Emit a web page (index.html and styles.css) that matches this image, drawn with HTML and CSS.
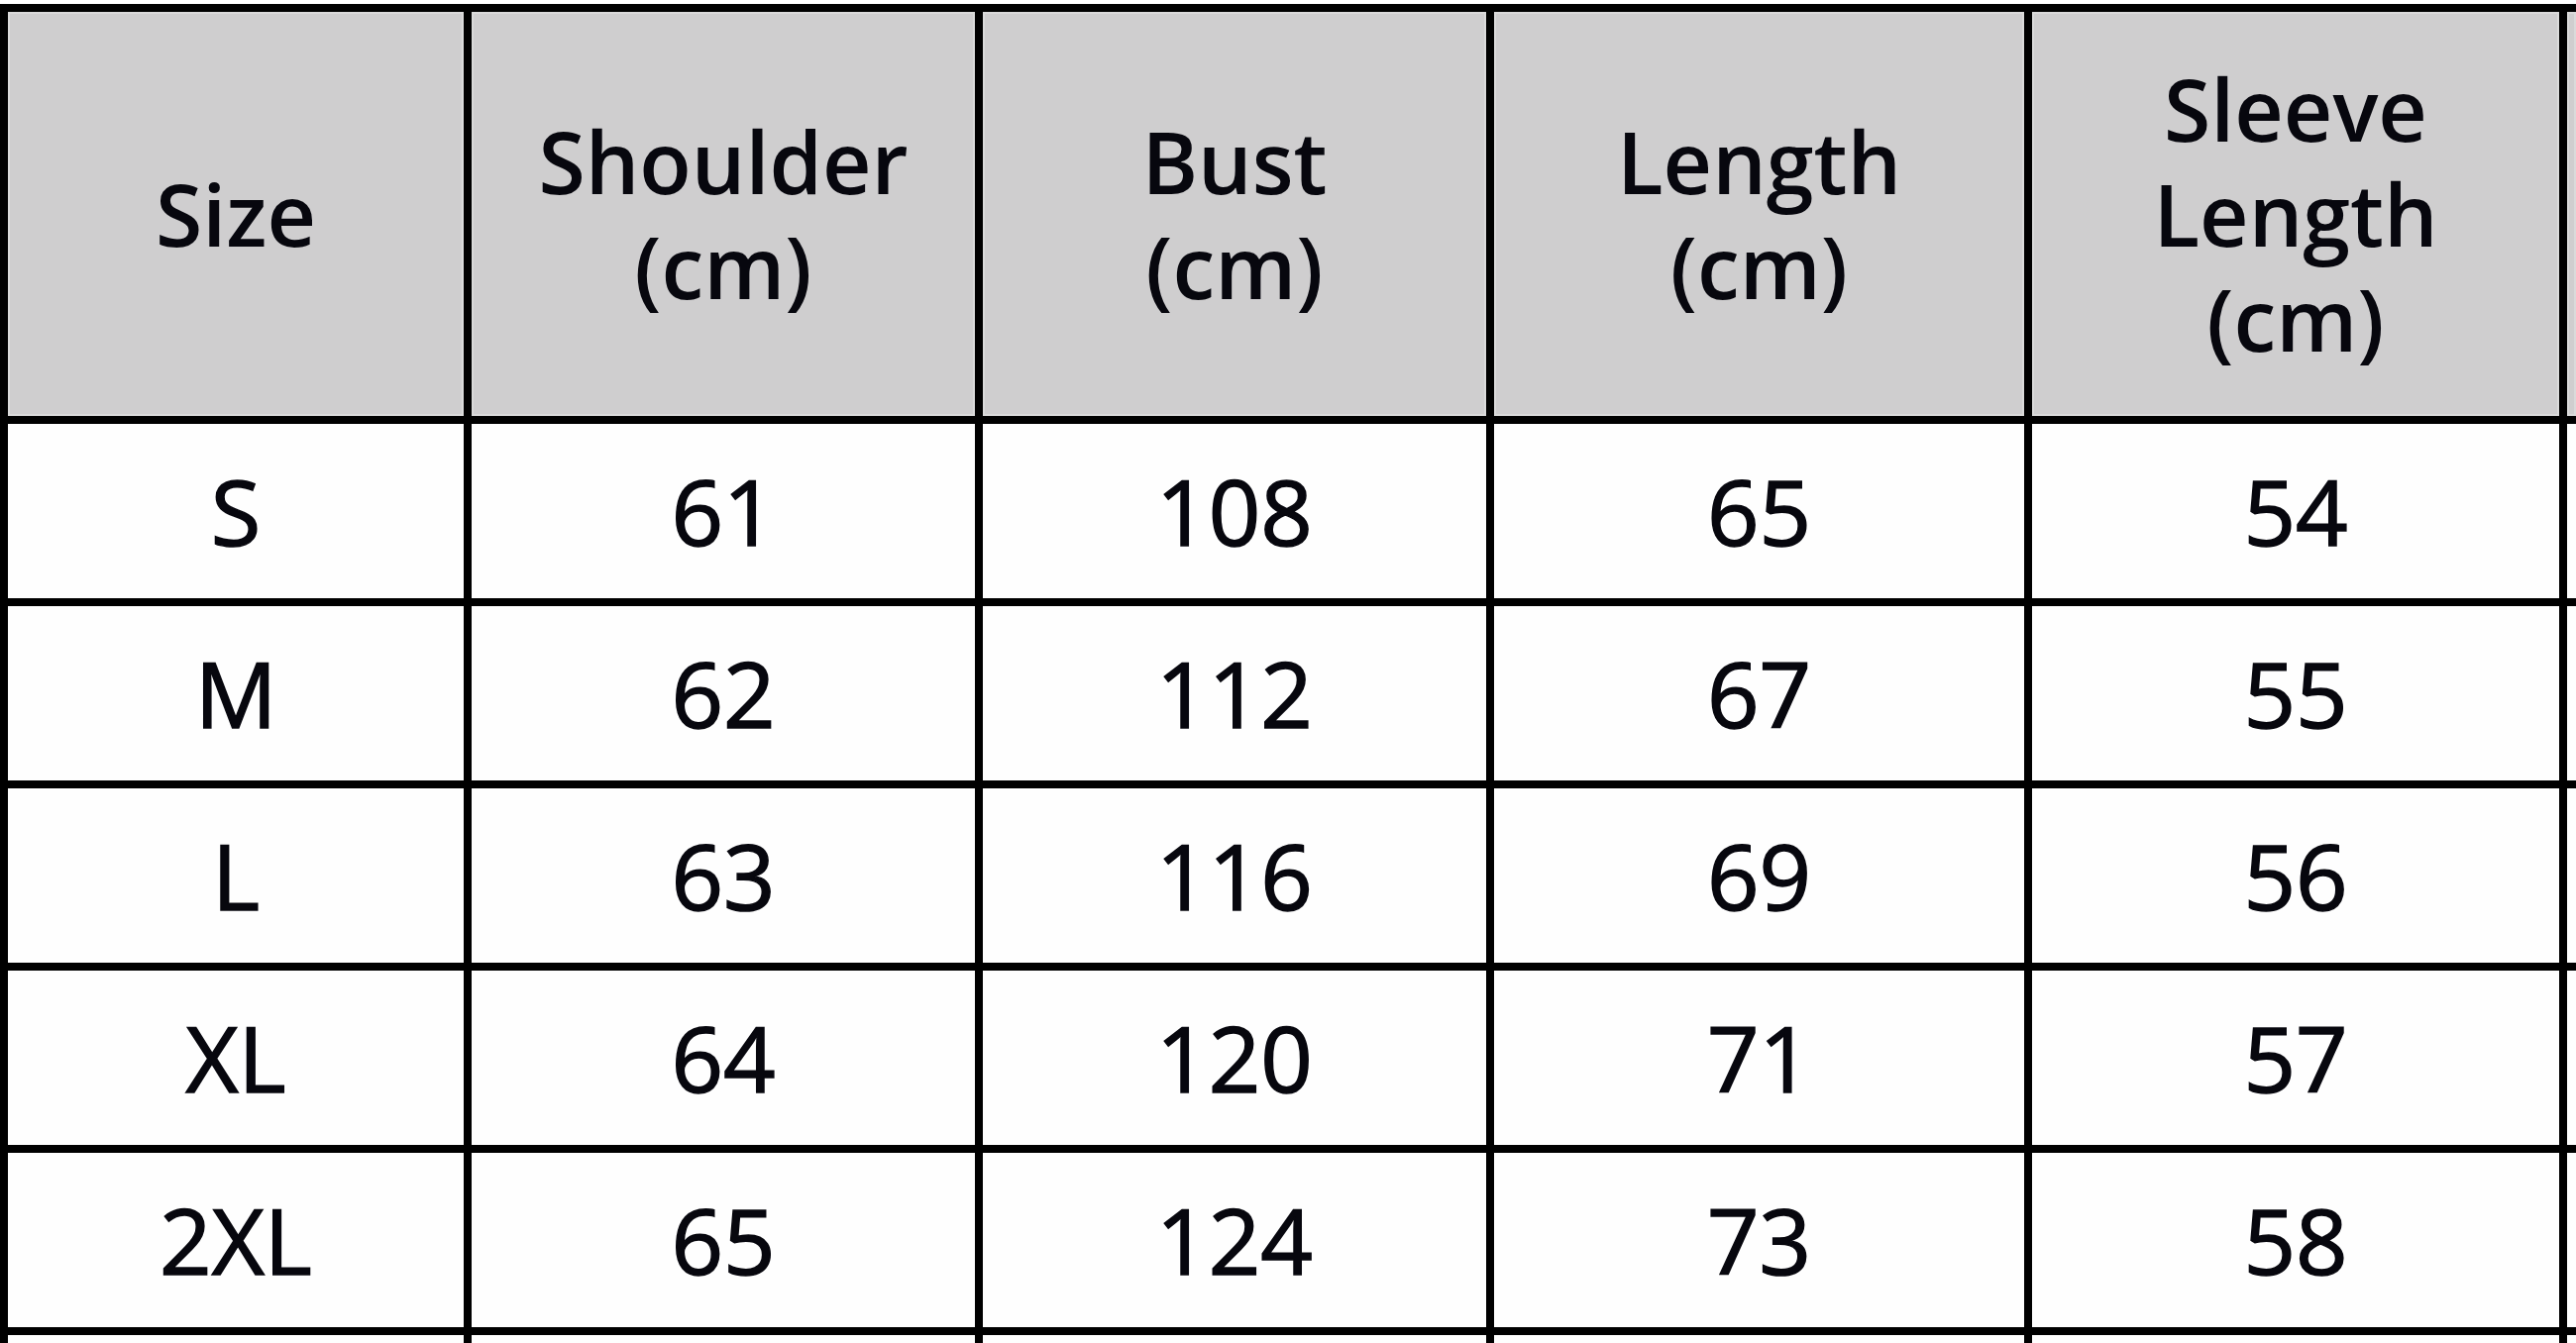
FILE: index.html
```html
<!DOCTYPE html>
<html lang="en">
<head>
<meta charset="utf-8">
<title>Size Chart</title>
<link rel="stylesheet" href="styles.css">
</head>
<body>
<div class="sheet">
  <div class="cell head">Size</div>
  <div class="cell head">Shoulder<br>(cm)</div>
  <div class="cell head">Bust<br>(cm)</div>
  <div class="cell head">Length<br>(cm)</div>
  <div class="cell head">Sleeve<br>Length<br>(cm)</div>
  <div class="cell head"></div>

  <div class="cell">S</div><div class="cell">61</div><div class="cell">108</div><div class="cell">65</div><div class="cell">54</div><div class="cell"></div>
  <div class="cell">M</div><div class="cell">62</div><div class="cell">112</div><div class="cell">67</div><div class="cell">55</div><div class="cell"></div>
  <div class="cell">L</div><div class="cell">63</div><div class="cell">116</div><div class="cell">69</div><div class="cell">56</div><div class="cell"></div>
  <div class="cell">XL</div><div class="cell">64</div><div class="cell">120</div><div class="cell">71</div><div class="cell">57</div><div class="cell"></div>
  <div class="cell">2XL</div><div class="cell">65</div><div class="cell">124</div><div class="cell">73</div><div class="cell">58</div><div class="cell"></div>

  <div class="cell"></div><div class="cell"></div><div class="cell"></div><div class="cell"></div><div class="cell"></div><div class="cell"></div>
</div>
</body>
</html>
```

FILE: styles.css
```css
html, body {
  margin: 0;
  padding: 0;
  background: #ffffff;
  overflow: hidden;
}

body {
  padding-top: 4px;
  font-family: "Open Sans", "Noto Sans", "DejaVu Sans", sans-serif;
  color: #07070e;
}

.sheet {
  display: grid;
  grid-template-columns: 460px 508px 508px 535px 532px 9px;
  grid-template-rows: 408px repeat(5, 176px) 8px;
  gap: 8px;
  padding: 8px 0 0 8px;
  background: #000000;
  width: 2600px;
  box-sizing: border-box;
  overflow: hidden;
}

.cell {
  background: #fefefe;
  display: flex;
  align-items: center;
  justify-content: center;
  text-align: center;
  font-size: 92px;
  font-weight: 400;
  line-height: 1;
  overflow: hidden;
  -webkit-text-stroke: 1.5px #07070e;
}

.head {
  background: #cfcecf;
  box-shadow: inset 0 0 0 2px #dadada;
  font-size: 86px;
  font-weight: 600;
  line-height: 106px;
  -webkit-text-stroke: 0;
}
```
